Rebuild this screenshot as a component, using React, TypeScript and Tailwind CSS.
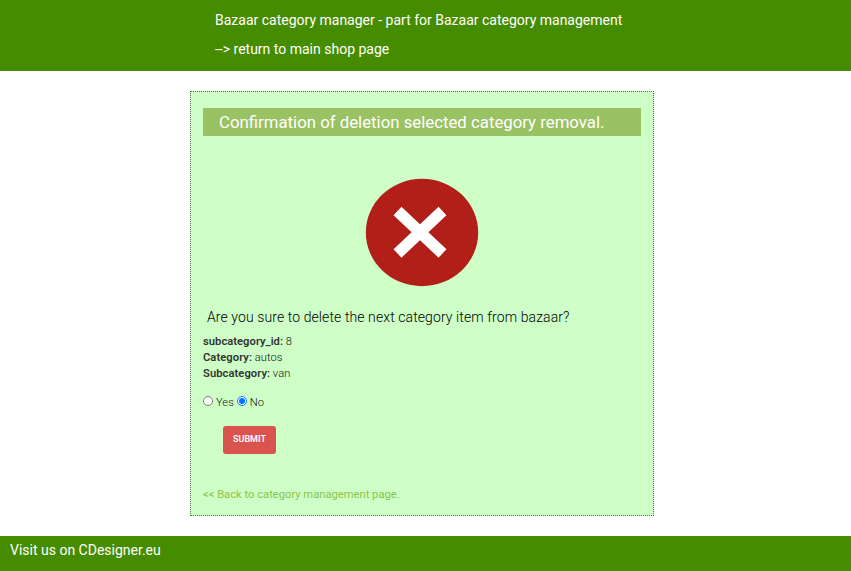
export default function App() {
  return (
    <div className="flex h-[571px] w-[851px] flex-col bg-white font-[Roboto,sans-serif] text-[#333]">
      <header className="h-[71px] bg-[#468c00] pl-[215px] text-[14px] leading-[21px] text-white">
        <p className="pt-[10px]">Bazaar category manager - part for Bazaar category management</p>
        <a className="mt-2 block">--&gt; return to main shop page</a>
      </header>
      <main className="ml-[190px] mt-[20px] flex h-[425px] w-[464px] flex-col border border-dotted border-[#55704f] bg-[#ceffc6] px-3 pt-4 text-[11.2px] leading-4">
        <h1 className="h-7 bg-[#99c262] pl-4 text-[16.8px] leading-[28px] text-white">Confirmation of deletion selected category removal.</h1>
        <svg className="mt-[42px] ml-[162px] h-[110px] w-[114px] shrink-0" viewBox="0 0 114 110">
          <ellipse cx="57" cy="54.5" rx="56.2" ry="53.7" fill="#b11f18" />
          <path d="M32.5 33 L77.5 75.5 M77.5 33 L32.5 75.5" stroke="white" strokeWidth="11.5" />
        </svg>
        <p className="mt-[18px] pl-1 text-[14px] font-light leading-[22px] tracking-[0.095px] text-black">Are you sure to delete the next category item from bazaar?</p>
        <div className="mt-[6px] font-light text-[#111]">
          <p><b className="font-semibold tracking-[0.03px] text-[#333]">subcategory_id:</b> 8</p>
          <p><b className="font-semibold tracking-[0.06px] text-[#333]">Category:</b> autos</p>
          <p><b className="font-semibold tracking-[0.06px] text-[#333]">Subcategory:</b> van</p>
        </div>
        <form className="mt-[13px] font-light text-[#111]">
          <div className="flex h-4 items-center">
            <input type="radio" name="confirm" className="mr-[3px] mb-[5px] h-[10px] w-[10px]" />Yes
            <input type="radio" name="confirm" defaultChecked className="mr-[3px] mb-[5px] ml-[3px] h-[10px] w-[10px]" />No
          </div>
          <button type="button" className="mt-[15px] ml-5 block h-7 w-[53px] rounded-[3px] bg-[#d9534f] pb-[2px] text-[9px] font-semibold text-white">SUBMIT</button>
        </form>
        <a className="mt-[33px] text-[#8bc34a]">&lt;&lt; Back to category management page.</a>
      </main>
      <footer className="mt-[20px] h-[35px] bg-[#468c00] pl-[10px] text-[14px] leading-[28px] text-white">Visit us on CDesigner.eu</footer>
    </div>
  );
}
